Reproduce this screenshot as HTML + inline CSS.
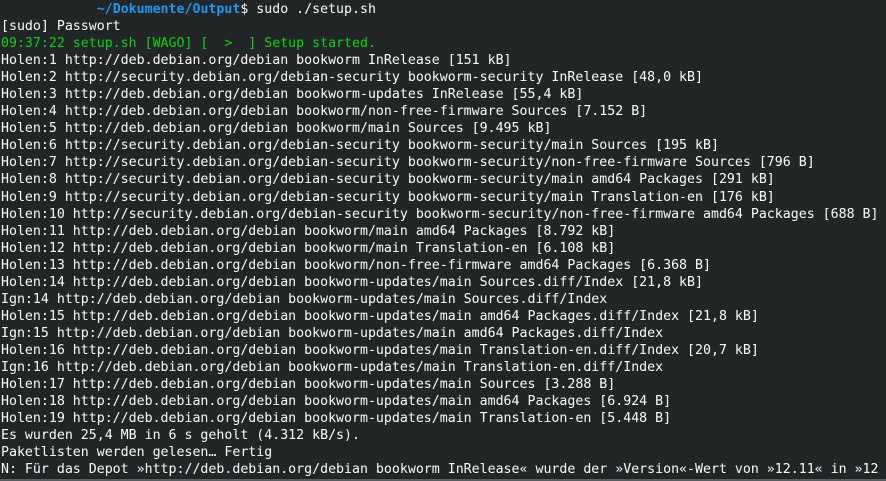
<!DOCTYPE html>
<html><head><meta charset="utf-8"><style>
html,body{margin:0;padding:0;}
body{width:886px;height:481px;background:#232627;overflow:hidden;position:relative;}
pre{margin:0;padding:0 0 0 1px;position:absolute;top:1px;left:0;font-family:"DejaVu Sans Mono","Liberation Mono",monospace;font-size:13.25px;line-height:17.05px;color:#fcfcfc;white-space:pre;}
.b{color:#1d99f3;font-weight:bold}
.g{color:#11d116}
.bar{position:absolute;left:0;right:0;bottom:0;height:2px;background:#5a5e62;}
</style></head><body>
<pre>            <span class="b">~/Dokumente/Output</span>$ sudo ./setup.sh
[sudo] Passwort
<span class="g">09:37:22 setup.sh [WAGO] [  &gt;  ] Setup started.</span>
Holen:1 http://deb.debian.org/debian bookworm InRelease [151 kB]
Holen:2 http://security.debian.org/debian-security bookworm-security InRelease [48,0 kB]
Holen:3 http://deb.debian.org/debian bookworm-updates InRelease [55,4 kB]
Holen:4 http://deb.debian.org/debian bookworm/non-free-firmware Sources [7.152 B]
Holen:5 http://deb.debian.org/debian bookworm/main Sources [9.495 kB]
Holen:6 http://security.debian.org/debian-security bookworm-security/main Sources [195 kB]
Holen:7 http://security.debian.org/debian-security bookworm-security/non-free-firmware Sources [796 B]
Holen:8 http://security.debian.org/debian-security bookworm-security/main amd64 Packages [291 kB]
Holen:9 http://security.debian.org/debian-security bookworm-security/main Translation-en [176 kB]
Holen:10 http://security.debian.org/debian-security bookworm-security/non-free-firmware amd64 Packages [688 B]
Holen:11 http://deb.debian.org/debian bookworm/main amd64 Packages [8.792 kB]
Holen:12 http://deb.debian.org/debian bookworm/main Translation-en [6.108 kB]
Holen:13 http://deb.debian.org/debian bookworm/non-free-firmware amd64 Packages [6.368 B]
Holen:14 http://deb.debian.org/debian bookworm-updates/main Sources.diff/Index [21,8 kB]
Ign:14 http://deb.debian.org/debian bookworm-updates/main Sources.diff/Index
Holen:15 http://deb.debian.org/debian bookworm-updates/main amd64 Packages.diff/Index [21,8 kB]
Ign:15 http://deb.debian.org/debian bookworm-updates/main amd64 Packages.diff/Index
Holen:16 http://deb.debian.org/debian bookworm-updates/main Translation-en.diff/Index [20,7 kB]
Ign:16 http://deb.debian.org/debian bookworm-updates/main Translation-en.diff/Index
Holen:17 http://deb.debian.org/debian bookworm-updates/main Sources [3.288 B]
Holen:18 http://deb.debian.org/debian bookworm-updates/main amd64 Packages [6.924 B]
Holen:19 http://deb.debian.org/debian bookworm-updates/main Translation-en [5.448 B]
Es wurden 25,4 MB in 6 s geholt (4.312 kB/s).
Paketlisten werden gelesen… Fertig
N: Für das Depot »http://deb.debian.org/debian bookworm InRelease« wurde der »Version«-Wert von »12.11« in »12</pre>
<div class="bar"></div>
</body></html>
